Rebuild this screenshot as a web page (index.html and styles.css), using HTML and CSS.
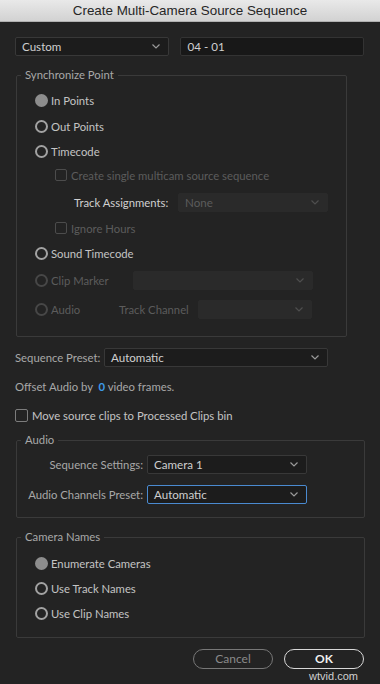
FILE: index.html
```html
<!DOCTYPE html>
<html>
<head>
<meta charset="utf-8">
<link rel="stylesheet" href="styles.css">
</head>
<body>
<div class="window">
  <div class="titlebar">Create Multi-Camera Source Sequence</div>
  <div class="content">
    <div class="toprow">
      <div class="select custom"><span>Custom</span><svg class="chev" viewBox="0 0 8 5"><path d="M0.5 0.5 L4 4 L7.5 0.5"/></svg></div>
      <div class="textfield">04 - 01</div>
    </div>

    <fieldset class="group sync">
      <legend>Synchronize Point</legend>
      <div class="sync-grid">
        <div class="row"><span class="radio on"></span><span class="lbl">In Points</span></div>
        <div class="row"><span class="radio"></span><span class="lbl">Out Points</span></div>
        <div class="row"><span class="radio"></span><span class="lbl">Timecode</span></div>
        <div class="row sub"><span class="check dis"></span><span class="lbl dim">Create single multicam source sequence</span></div>
        <div class="row sub2"><span class="lbl strong">Track Assignments:</span><div class="select dis track"><span>None</span><svg class="chev" viewBox="0 0 8 5"><path d="M0.5 0.5 L4 4 L7.5 0.5"/></svg></div></div>
        <div class="row sub"><span class="check dis"></span><span class="lbl dim">Ignore Hours</span></div>
        <div class="row"><span class="radio"></span><span class="lbl">Sound Timecode</span></div>
        <div class="row"><span class="radio dis"></span><span class="lbl dim cm">Clip Marker</span><div class="select dis clipm"><svg class="chev" viewBox="0 0 8 5"><path d="M0.5 0.5 L4 4 L7.5 0.5"/></svg></div></div>
        <div class="row"><span class="radio dis"></span><span class="lbl dim au">Audio</span><span class="lbl dim tc">Track Channel</span><div class="select dis trackch"><svg class="chev" viewBox="0 0 8 5"><path d="M0.5 0.5 L4 4 L7.5 0.5"/></svg></div></div>
      </div>
    </fieldset>

    <div class="presetrow">
      <span class="lbl preset-lbl">Sequence Preset:</span>
      <div class="select preset"><span>Automatic</span><svg class="chev" viewBox="0 0 8 5"><path d="M0.5 0.5 L4 4 L7.5 0.5"/></svg></div>
    </div>

    <div class="offsetrow">Offset Audio by&nbsp; <span class="num">0</span> video frames.</div>

    <div class="moverow"><span class="check"></span><span class="lbl">Move source clips to Processed Clips bin</span></div>

    <fieldset class="group audio">
      <legend>Audio</legend>
      <div class="audio-grid">
        <span class="lbl right">Sequence Settings:</span>
        <div class="select aud"><span>Camera 1</span><svg class="chev" viewBox="0 0 8 5"><path d="M0.5 0.5 L4 4 L7.5 0.5"/></svg></div>
        <span class="lbl right">Audio Channels Preset:</span>
        <div class="select aud focus"><span>Automatic</span><svg class="chev" viewBox="0 0 8 5"><path d="M0.5 0.5 L4 4 L7.5 0.5"/></svg></div>
      </div>
    </fieldset>

    <fieldset class="group cams">
      <legend>Camera Names</legend>
      <div class="cam-list">
        <div class="row"><span class="radio on"></span><span class="lbl">Enumerate Cameras</span></div>
        <div class="row"><span class="radio"></span><span class="lbl">Use Track Names</span></div>
        <div class="row"><span class="radio"></span><span class="lbl">Use Clip Names</span></div>
      </div>
    </fieldset>

    <div class="buttons">
      <button class="btn cancel">Cancel</button>
      <button class="btn ok">OK</button>
    </div>
  </div>
  <div class="watermark">wtvid.com</div>
</div>
</body>
</html>
```

FILE: styles.css
```css
* { box-sizing: border-box; }
html, body { margin: 0; padding: 0; }
body {
  width: 380px;
  height: 684px;
  overflow: hidden;
  background: #232323;
  font-family: "Lato", "Open Sans", sans-serif;
  font-size: 11.3px;
  color: #bdbdbd;
}
.window { position: relative; width: 380px; height: 684px; }
.titlebar {
  height: 22px;
  line-height: 22px;
  text-align: center;
  font-family: "Liberation Sans", Arial, sans-serif;
  font-size: 13.4px;
  color: #262626;
  background: linear-gradient(#e9e9e9, #d2d2d2);
  border-bottom: 1px solid #b0b0b0;
}
.content { padding: 15px 16px 0 15px; }

.toprow { display: flex; gap: 11px; height: 19px; }
.select {
  position: relative;
  display: flex;
  align-items: center;
  height: 19px;
  padding-left: 6px;
  background: #1c1c1c;
  border: 1px solid #383838;
  border-radius: 2px;
  color: #cfcfcf;
  font-size: 11.6px;
}
.chev {
  position: absolute;
  right: 8px;
  top: 6px;
  width: 8px;
  height: 5px;
  fill: none;
  stroke: #9a9a9a;
  stroke-width: 1.2;
}
.custom { width: 154px; }
.textfield {
  width: 185px;
  height: 19px;
  line-height: 17px;
  padding-left: 7px;
  background: #181818;
  border: 1px solid #333;
  border-radius: 2px;
  color: #d0d0d0;
  font-size: 11.6px;
}

.group {
  margin: 0 0 0 1px;
  padding: 0;
  border: 1px solid #3a3a3a;
  border-radius: 2px;
  min-width: 0;
}
.group legend {
  margin-left: 4px;
  padding: 0 4px;
  line-height: 16px;
  height: 16px;
  color: #a8a8a8;
}
.sync { margin-top: 11px; width: 331px; padding: 4px 0 11px 0; }
.sync-grid {
  display: grid;
  padding-left: 18px;
  grid-template-rows: 26px 26px 24px 24px 30px 22px 28px 26px 32px;
}
.row { display: flex; align-items: center; }
.radio {
  width: 13px;
  height: 13px;
  border-radius: 50%;
  border: 2px solid #a2a2a2;
  flex: none;
}
.radio.on { background: #8d8d8d; border-color: #8d8d8d; }
.radio.dis { border-color: #474747; }
.radio + .lbl { margin-left: 3px; }
.lbl { color: #c4c4c4; white-space: nowrap; }
.lbl.dim { color: #5c5c5c; }
.lbl.strong { color: #d0d0d0; }
.check {
  width: 13px;
  height: 13px;
  border: 1.5px solid #7c7c7c;
  border-radius: 2px;
  flex: none;
}
.check.dis { width: 12px; height: 12px; border-color: #4c4c4c; }
.check + .lbl { margin-left: 4px; }
.row.sub { padding-left: 20px; }
.row.sub2 { padding-left: 39px; }
.select.dis { background: #2a2a2a; border-color: #2a2a2a; color: #5c5c5c; }
.select.dis .chev { stroke: #4e4e4e; }
.track { width: 150px; margin-left: auto; margin-right: 18px; }
.cm { width: 82px; }
.clipm { width: 180px; height: 19px; }
.au { width: 68px; }
.tc { width: 79px; }
.trackch { width: 114px; height: 19px; }

.presetrow { display: flex; align-items: center; margin-top: 11px; height: 19px; }
.preset-lbl { width: 89px; color: #a8a8a8; }
.preset { width: 224px; }

.offsetrow { margin-top: 10px; height: 20px; line-height: 20px; color: #a8a8a8; }
.num { color: #3d9be9; font-weight: 700; }

.moverow { display: flex; align-items: center; margin-top: 8px; height: 21px; }

.audio { margin-top: 6px; width: 349px; padding: 7px 0 13px 0; }
.audio-grid {
  display: grid;
  grid-template-columns: 126px 160px;
  grid-auto-rows: 19px;
  column-gap: 4px;
  row-gap: 11px;
  align-items: center;
}
.right { text-align: right; color: #a8a8a8; }
.aud { width: 160px; }
.focus { border-color: #4a8ad0; }

.cams { margin-top: 11px; width: 349px; padding: 6px 0 11px 0; }
.cam-list { display: grid; grid-auto-rows: 25px; padding-left: 18px; }

.buttons { display: flex; justify-content: flex-end; gap: 11px; margin-top: 11px; margin-right: 0; }
.btn {
  width: 80px;
  height: 20px;
  border-radius: 10px;
  background: transparent;
  font-family: "Lato", "Open Sans", sans-serif;
  font-size: 12px;
  padding: 0;
  line-height: 16px;
}
.cancel { border: 1.5px solid #777; color: #8a8a8a; }
.ok { border: 1.5px solid #d8d8d8; color: #f0f0f0; font-weight: 700; }

.watermark {
  position: absolute;
  right: 22px;
  bottom: 2px;
  font-family: "Liberation Sans", Arial, sans-serif;
  font-size: 11px;
  color: #d0d0d0;
}
```
